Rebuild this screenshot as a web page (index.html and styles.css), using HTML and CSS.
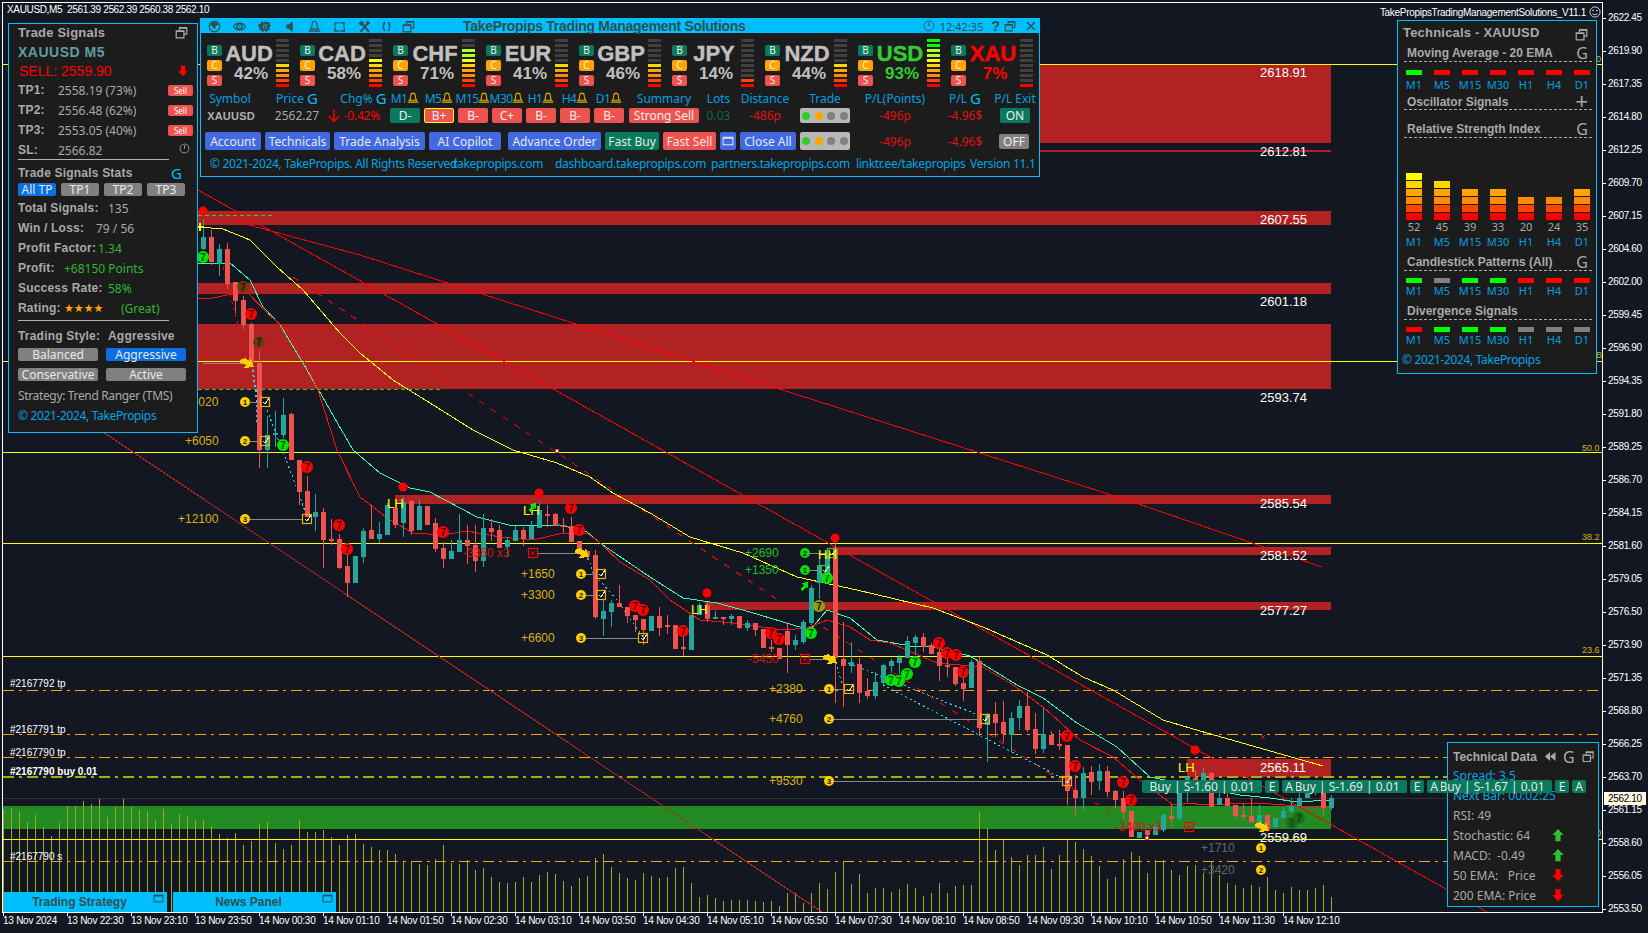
FILE: index.html
```html
<!DOCTYPE html>
<html>
<head>
    <title>XAUUSD,M5</title>
    <link rel="stylesheet" href="styles.css">
</head>
<body>
    <svg class="defs" width="0" height="0">
        <symbol id="i-restore" viewBox="0 0 16 16"><path d="M5.5 5V2h9v8h-3.5M1.5 6h9.5v8.5h-9.500z" fill="none" stroke="currentColor" stroke-width="1.5"/><path d="M5.500 2h9v1.500h-9zM1.500 6h9.500v1.500h-9.500z" fill="currentColor"/></symbol>
        <symbol id="i-globe" viewBox="0 0 16 16"><circle cx="8" cy="8" r="6.500" fill="none" stroke="currentColor" stroke-width="1.500"/><path d="M6 2l5 1 2 3-3 1-1 3-2 1-1-3-3-1 1-3z" fill="currentColor"/></symbol>
        <symbol id="i-eye" viewBox="0 0 16 16"><path d="M.5 8c3-5.500 12-5.500 15 0-3 5.500-12 5.500-15 0z" fill="none" stroke="currentColor" stroke-width="1.500"/><circle cx="8" cy="8" r="3.200" fill="none" stroke="currentColor" stroke-width="1.700"/><circle cx="8" cy="8" r="1" fill="currentColor"/></symbol>
        <symbol id="i-burst" viewBox="0 0 16 16"><path d="M1 5l3-1 0-3 3 2 3-2 1 2 4-1-1 3 2 2-2 2 1 3-3 0-1 3-3-2-3 2-1-3-3 0 1-3-2-2z" fill="currentColor"/><path d="M6 11l2-6M9 11l2-6" stroke="#00bfff" stroke-width="1"/></symbol>
        <symbol id="i-speaker" viewBox="0 0 16 16"><path d="M4 5.500h2.500L12 1.500v13l-5.500-4H4z" fill="currentColor"/></symbol>
        <symbol id="i-bell" viewBox="0 0 16 16"><path d="M8 1.500c-2 0-3 1.500-3 3.500 0 3.500-.5 4.500-2 6h10c-1.500-1.500-2-2.500-2-6 0-2-1-3.500-3-3.500z" fill="none" stroke="currentColor" stroke-width="1.400"/><path d="M1 13.500h14" stroke="currentColor" stroke-width="1.700"/></symbol>
        <symbol id="i-frame" viewBox="0 0 16 16"><path d="M3 3.500h3M10 3.500h3.500V6M14 10v3.500h-4M6 13.500H2.500V10M2.500 6V3.500" fill="none" stroke="currentColor" stroke-width="1.700"/><path d="M6 3.500h4M6 13.500h4M2.500 6v4M13.500 6v4" stroke="currentColor" stroke-width="1"/></symbol>
        <symbol id="i-tools" viewBox="0 0 16 16"><path d="M3 14.500L12 4M4 3l9.500 11.500" stroke="currentColor" stroke-width="2.400"/><path d="M.5 4.500L4 1l3.500 2.500L4 7zM10.500 1.500c2.500-1 4.500 1 4 3.500l-2.500.5-1.500-1.500z" fill="currentColor"/></symbol>
        <symbol id="i-code" viewBox="0 0 16 16"><path d="M6 2.500C3.500 5 3.500 11 6 13.500M10 2.500c2.500 2.500 2.500 8.500 0 11" fill="none" stroke="currentColor" stroke-width="1.800"/></symbol>
        <symbol id="i-clock" viewBox="0 0 16 16"><circle cx="8" cy="8" r="6.500" fill="none" stroke="currentColor" stroke-width="1.200"/><path d="M8 3.500V8" stroke="currentColor" stroke-width="1.400"/></symbol>
        <symbol id="i-x" viewBox="0 0 16 16"><path d="M3 3l10 10M13 3L3 13" stroke="currentColor" stroke-width="2"/></symbol>
        <symbol id="i-rewind" viewBox="0 0 16 16"><path d="M8 2v12L1 8zM15 2v12L8 8z" fill="currentColor"/></symbol>
        <symbol id="i-window" viewBox="0 0 16 16"><path d="M1.500 3h13v10h-13z" fill="none" stroke="currentColor" stroke-width="1.400"/><path d="M1.500 3h13v2h-13z" fill="currentColor"/></symbol>
        <symbol id="i-up" viewBox="0 0 16 16"><path d="M8 1l6.500 7H11v7H5V8H1.500z" fill="currentColor"/></symbol>
        <symbol id="i-down" viewBox="0 0 16 16"><path d="M8 15L1.500 8H5V1h6v7h3.500z" fill="currentColor"/></symbol>
        <symbol id="i-thin-down" viewBox="0 0 16 16"><path d="M8 1v13M2 8l6 6 6-6" fill="none" stroke="currentColor" stroke-width="1.600"/></symbol>
        <symbol id="i-smile" viewBox="0 0 16 16"><circle cx="8" cy="8" r="6.800" fill="none" stroke="currentColor"/><circle cx="5.500" cy="6" r="1" fill="currentColor"/><circle cx="10.500" cy="6" r="1" fill="currentColor"/><path d="M4.500 10c1.500 2 5.500 2 7 0" fill="none" stroke="currentColor"/></symbol>
    </svg>

    <div class="terminal">
        <svg id="chart" class="chart" width="1648" height="933"></svg>

        <div class="chart-title">XAUUSD,M5&nbsp; 2561.39 2562.39 2560.38 2562.10</div>
        <div class="ea-name">TakePropipsTradingManagementSolutions_V11.1 <svg class="smile"><use href="#i-smile"/></svg></div>

        <div class="price-axis">
            <span>2622.45</span><span>2619.90</span><span>2617.35</span><span>2614.80</span>
            <span>2612.25</span><span>2609.70</span><span>2607.15</span><span>2604.60</span>
            <span>2602.00</span><span>2599.45</span><span>2596.90</span><span>2594.35</span>
            <span>2591.80</span><span>2589.25</span><span>2586.70</span><span>2584.15</span>
            <span>2581.60</span><span>2579.05</span><span>2576.50</span><span>2573.90</span>
            <span>2571.35</span><span>2568.80</span><span>2566.25</span><span>2563.70</span>
            <span>2561.15</span><span>2558.60</span><span>2556.05</span><span>2553.50</span>
        </div>
        <div class="price-now">2562.10</div>

        <div class="time-axis">
            <span>13 Nov 2024</span><span>13 Nov 22:30</span><span>13 Nov 23:10</span><span>13 Nov 23:50</span>
            <span>14 Nov 00:30</span><span>14 Nov 01:10</span><span>14 Nov 01:50</span><span>14 Nov 02:30</span>
            <span>14 Nov 03:10</span><span>14 Nov 03:50</span><span>14 Nov 04:30</span><span>14 Nov 05:10</span>
            <span>14 Nov 05:50</span><span>14 Nov 07:30</span><span>14 Nov 08:10</span><span>14 Nov 08:50</span>
            <span>14 Nov 09:30</span><span>14 Nov 10:10</span><span>14 Nov 10:50</span><span>14 Nov 11:30</span>
            <span>14 Nov 12:10</span>
        </div>

        <!-- Trade signals window -->
        <div class="panel signals">
            <div class="row head-row"><span class="title">Trade Signals</span><svg class="ic13 push"><use href="#i-restore"/></svg></div>
            <div class="row symbol-row">XAUUSD M5</div>
            <div class="row sell-row"><span>SELL: 2559.90</span><svg class="ic12 push red"><use href="#i-down"/></svg></div>
            <div class="row"><b class="w40">TP1:</b><span>2558.19 (73%)</span><span class="sell-tag push">Sell</span></div>
            <div class="row"><b class="w40">TP2:</b><span>2556.48 (62%)</span><span class="sell-tag push">Sell</span></div>
            <div class="row"><b class="w40">TP3:</b><span>2553.05 (40%)</span><span class="sell-tag push">Sell</span></div>
            <div class="row"><b class="w40">SL:</b><span>2566.82</span><svg class="ic11 push clock-r"><use href="#i-clock"/></svg></div>
            <div class="rule"></div>
            <div class="row stats-head"><b>Trade Signals Stats</b><span class="g-mark push">G</span></div>
            <div class="tabs">
                <span class="tab on">All TP</span><span class="tab">TP1</span><span class="tab">TP2</span><span class="tab">TP3</span>
            </div>
            <div class="row stat-first"><b class="w90">Total Signals:</b><span>135</span></div>
            <div class="row"><b class="w78">Win / Loss:</b><span>79 / 56</span></div>
            <div class="row"><b class="w80">Profit Factor:</b><span class="good">1.34</span></div>
            <div class="row"><b class="w46">Profit:</b><span class="good">+68150 Points</span></div>
            <div class="row"><b class="w90">Success Rate:</b><span class="good">58%</span></div>
            <div class="row"><b class="w46">Rating:</b><span class="stars">★★★★</span><span class="good great">(Great)</span></div>
            <div class="rule rule-2"></div>
            <div class="row"><b class="w90">Trading Style:</b><b>Aggressive</b></div>
            <div class="styles">
                <span class="tab">Balanced</span><span class="tab on">Aggressive</span>
                <span class="tab">Conservative</span><span class="tab">Active</span>
            </div>
            <div class="row strategy">Strategy: Trend Ranger (TMS)</div>
            <div class="row copy">© 2021-2024, TakePropips</div>
        </div>

        <!-- Main management window -->
        <div class="panel manager">
            <div class="titlebar">
                <div class="tool-icons">
                    <svg><use href="#i-globe"/></svg><svg><use href="#i-eye"/></svg><svg><use href="#i-burst"/></svg>
                    <svg><use href="#i-speaker"/></svg><svg><use href="#i-bell"/></svg><svg><use href="#i-frame"/></svg>
                    <svg><use href="#i-tools"/></svg><svg><use href="#i-code"/></svg><svg><use href="#i-restore"/></svg>
                </div>
                <div class="app-title">TakePropips Trading Management Solutions</div>
                <svg class="ic12 clock-t"><use href="#i-clock"/></svg>
                <span class="clock-text">12:42:35</span>
                <span class="help">?</span>
                <svg class="ic12 win-btn"><use href="#i-restore"/></svg>
                <svg class="ic12 win-close"><use href="#i-x"/></svg>
            </div>

            <div class="currencies">
                <div class="cur"><div class="bcs"><span class="b">B</span><span class="c">C</span><span class="s">S</span></div><div class="cur-name"><strong>AUD</strong><em>42%</em></div><div class="meter" data-lit="5"></div></div>
                <div class="cur"><div class="bcs"><span class="b">B</span><span class="c">C</span><span class="s">S</span></div><div class="cur-name"><strong>CAD</strong><em>58%</em></div><div class="meter" data-lit="6"></div></div>
                <div class="cur"><div class="bcs"><span class="b">B</span><span class="c">C</span><span class="s">S</span></div><div class="cur-name"><strong>CHF</strong><em>71%</em></div><div class="meter" data-lit="8"></div></div>
                <div class="cur"><div class="bcs"><span class="b">B</span><span class="c">C</span><span class="s">S</span></div><div class="cur-name"><strong>EUR</strong><em>41%</em></div><div class="meter" data-lit="5"></div></div>
                <div class="cur"><div class="bcs"><span class="b">B</span><span class="c">C</span><span class="s">S</span></div><div class="cur-name"><strong>GBP</strong><em>46%</em></div><div class="meter" data-lit="5"></div></div>
                <div class="cur"><div class="bcs"><span class="b">B</span><span class="c">C</span><span class="s">S</span></div><div class="cur-name"><strong>JPY</strong><em>14%</em></div><div class="meter" data-lit="2"></div></div>
                <div class="cur"><div class="bcs"><span class="b">B</span><span class="c">C</span><span class="s">S</span></div><div class="cur-name"><strong>NZD</strong><em>44%</em></div><div class="meter" data-lit="5"></div></div>
                <div class="cur strong"><div class="bcs"><span class="b">B</span><span class="c">C</span><span class="s">S</span></div><div class="cur-name"><strong>USD</strong><em>93%</em></div><div class="meter" data-lit="10"></div></div>
                <div class="cur weak"><div class="bcs"><span class="b">B</span><span class="c">C</span><span class="s">S</span></div><div class="cur-name"><strong>XAU</strong><em>7%</em></div><div class="meter" data-lit="1"></div></div>
            </div>

            <div class="info">
                <span>Symbol</span>
                <span>Price <i class="g-mark">G</i></span>
                <span>Chg% <i class="g-mark">G</i></span>
                <span class="tf">M1<svg class="bell"><use href="#i-bell"/></svg></span>
                <span class="tf">M5<svg class="bell"><use href="#i-bell"/></svg></span>
                <span class="tf">M15<svg class="bell"><use href="#i-bell"/></svg></span>
                <span class="tf">M30<svg class="bell"><use href="#i-bell"/></svg></span>
                <span class="tf">H1<svg class="bell"><use href="#i-bell"/></svg></span>
                <span class="tf">H4<svg class="bell"><use href="#i-bell"/></svg></span>
                <span class="tf">D1<svg class="bell"><use href="#i-bell"/></svg></span>
                <span>Summary</span>
                <span>Lots</span>
                <span>Distance</span>
                <span>Trade</span>
                <span>P/L(Points)</span>
                <span>P/L <i class="g-mark">G</i></span>
                <span>P/L Exit</span>

                <b class="v-sym">XAUUSD</b>
                <span class="v-grey">2562.27</span>
                <span class="v-chg"><svg class="ic14 red"><use href="#i-thin-down"/></svg>-0.42%</span>
                <span class="chip teal">D-</span>
                <span class="chip rd picked">B+</span>
                <span class="chip rd">B-</span>
                <span class="chip rd">C+</span>
                <span class="chip rd">B-</span>
                <span class="chip rd">B-</span>
                <span class="chip rd">B-</span>
                <span class="chip rd wide">Strong Sell</span>
                <span class="v-lots">0.03</span>
                <span class="v-red">-486p</span>
                <span class="dots"><i class="d-green"></i><i class="d-orange"></i><i></i><i></i></span>
                <span class="v-red">-496p</span>
                <span class="v-red">-4.96$</span>
                <span class="chip teal toggle">ON</span>
            </div>

            <div class="actions">
                <span class="btn">Account</span>
                <span class="btn">Technicals</span>
                <span class="btn">Trade Analysis</span>
                <span class="btn ai">AI Copilot</span>
                <span class="btn">Advance Order</span>
                <span class="btn buy">Fast Buy</span>
                <span class="btn sell">Fast Sell</span>
                <span class="btn"><svg class="ic12"><use href="#i-window"/></svg></span>
                <span class="btn">Close All</span>
                <span class="dots tall"><i class="d-green"></i><i class="d-orange"></i><i></i><i></i></span>
                <span class="v-red">-496p</span>
                <span class="v-red">-4.96$</span>
                <span class="chip off toggle">OFF</span>
            </div>

            <div class="links">
                <span>© 2021-2024, TakePropips. All Rights Reserved</span>
                <span>takepropips.com</span>
                <span>dashboard.takepropips.com</span>
                <span>partners.takepropips.com</span>
                <span>linktr.ee/takepropips</span>
                <span>Version 11.1</span>
            </div>
        </div>

        <!-- Technicals window -->
        <div class="panel technicals">
            <div class="tech-title"><span>Technicals - XAUUSD</span><svg class="ic13 push"><use href="#i-restore"/></svg></div>
            <div class="tech-head"><span>Moving Average - 20 EMA</span><span class="plain-mark push">G</span></div>
            <div class="bars bars-1"><i class="up"></i><i class="dn"></i><i class="dn"></i><i class="dn"></i><i class="dn"></i><i class="dn"></i><i class="dn"></i></div>
            <div class="tfs tfs-1"><span>M1</span><span>M5</span><span>M15</span><span>M30</span><span>H1</span><span>H4</span><span>D1</span></div>
            <div class="tech-head osc-head"><span>Oscillator Signals</span><span class="plain-mark plus push">+</span></div>
            <div class="tech-head rsi-head"><span>Relative Strength Index</span><span class="plain-mark push">G</span></div>
            <div class="rsi">
                <div class="stack" data-n="6"></div><div class="stack" data-n="5"></div><div class="stack" data-n="4"></div><div class="stack" data-n="4"></div>
                <div class="stack" data-n="3"></div><div class="stack" data-n="3"></div><div class="stack" data-n="4"></div>
            </div>
            <div class="tfs rsi-vals"><span>52</span><span>45</span><span>39</span><span>33</span><span>20</span><span>24</span><span>35</span></div>
            <div class="tfs"><span>M1</span><span>M5</span><span>M15</span><span>M30</span><span>H1</span><span>H4</span><span>D1</span></div>
            <div class="tech-head gap5"><span>Candlestick Patterns (All)</span><span class="plain-mark push">G</span></div>
            <div class="bars"><i class="up"></i><i class="no"></i><i class="up"></i><i class="up"></i><i class="dn"></i><i class="dn"></i><i class="dn"></i></div>
            <div class="tfs"><span>M1</span><span>M5</span><span>M15</span><span>M30</span><span>H1</span><span>H4</span><span>D1</span></div>
            <div class="tech-head gap5"><span>Divergence Signals</span></div>
            <div class="bars"><i class="dn"></i><i class="up"></i><i class="up"></i><i class="up"></i><i class="no"></i><i class="no"></i><i class="no"></i></div>
            <div class="tfs"><span>M1</span><span>M5</span><span>M15</span><span>M30</span><span>H1</span><span>H4</span><span>D1</span></div>
            <div class="copy tech-copy">© 2021-2024, TakePropips</div>
        </div>

        <!-- Technical data window -->
        <div class="panel data">
            <div class="data-head"><b>Technical Data</b><svg class="ic13 push"><use href="#i-rewind"/></svg><span class="plain-mark">G</span><svg class="ic13"><use href="#i-restore"/></svg></div>
            <div class="row blue">Spread: 3.5</div>
            <div class="row blue">Next Bar: 00:02:25</div>
            <div class="row">RSI: 49</div>
            <div class="row"><span class="w98">Stochastic: 64</span><svg class="ic14 green"><use href="#i-up"/></svg></div>
            <div class="row"><span class="w98">MACD: &nbsp;-0.49</span><svg class="ic14 green"><use href="#i-up"/></svg></div>
            <div class="row"><span class="w98">50 EMA: &nbsp; Price</span><svg class="ic14 red"><use href="#i-down"/></svg></div>
            <div class="row"><span class="w98">200 EMA: Price</span><svg class="ic14 red"><use href="#i-down"/></svg></div>
        </div>

        <!-- Open trades on the chart -->
        <div class="trade-tag t1"><span class="tt-main">Buy | S-1.60 | 0.01</span><span>E</span><span>A</span></div>
        <div class="trade-tag t2"><span class="tt-main">Buy | S-1.69 | 0.01</span><span>E</span><span>A</span></div>
        <div class="trade-tag t3"><span class="tt-main">Buy | S-1.67 | 0.01</span><span>E</span><span>A</span></div>

        <div class="dock">
            <div class="dock-btn"><span>Trading Strategy</span><svg class="ic11"><use href="#i-window"/></svg></div>
            <div class="dock-btn"><span>News Panel</span><svg class="ic11"><use href="#i-window"/></svg></div>
        </div>
    </div>
    <script src="script.js"></script>
</body>
</html>
```
FILE: styles.css
```css
* {
    box-sizing: border-box;
}
html, body {
    margin: 0;
    padding: 0;
    background-color: #131722;
}
body {
    font-family: "Noto Sans", sans-serif;
    font-size: 12px;
    color: #a9a9a9;
    overflow: hidden;
}
.defs {
    position: absolute;
}
.terminal {
    position: relative;
    width: 1648px;
    height: 933px;
    overflow: hidden;
}
.chart {
    position: absolute;
    left: 0;
    top: 0;
}
.chart polyline, .chart path {
    shape-rendering: crispEdges;
}
.chart text {
    font-family: "Liberation Sans", sans-serif;
}
.zone-label {
    font-size: 13px;
    fill: #fff;
}
.gain {
    font-size: 12px;
    fill: #d9b310;
}
.gain-green {
    font-size: 12px;
    fill: #1fc01f;
}
.loss {
    font-size: 12px;
    fill: #d81010;
}
.gain-off {
    font-size: 12px;
    fill: #666;
}
.swing {
    font-size: 13px;
    fill: #ffff00;
}
.order {
    font-size: 10px;
    fill: #fff;
}
.order-bold {
    font-size: 10px;
    font-weight: bold;
    fill: #fff;
}
.fib {
    font-size: 9px;
    fill: #d9b310;
}
.seven {
    font-size: 10px;
    font-weight: bold;
    fill: #3a0808;
    text-anchor: middle;
}
.seven-g {
    font-size: 10px;
    font-weight: bold;
    fill: #0a4a0a;
    text-anchor: middle;
}
.digit {
    font-size: 8px;
    font-weight: bold;
    fill: #222;
    text-anchor: middle;
}

.chart-title, .ea-name, .price-axis, .time-axis, .price-now {
    position: absolute;
    font-family: "Liberation Sans", sans-serif;
    font-size: 10px;
    color: #fff;
    white-space: nowrap;
}
.chart-title {
    left: 7px;
    top: 4px;
    letter-spacing: -.35px;
}
.ea-name {
    right: 47px;
    top: 6px;
    display: flex;
    align-items: center;
    gap: 3px;
    letter-spacing: -.3px;
}
.smile {
    width: 12px;
    height: 12px;
}
.price-axis {
    left: 1608px;
    top: 11px;
    height: 905px;
    display: flex;
    flex-direction: column;
    justify-content: space-between;
    letter-spacing: -.35px;
    line-height: 14px;
}
.price-now {
    left: 1604px;
    top: 792px;
    width: 42px;
    height: 13px;
    line-height: 13px;
    padding-left: 4px;
    letter-spacing: -.35px;
    color: #000;
    background-color: #fff8e7;
}
.time-axis {
    left: 3px;
    top: 915px;
    display: flex;
    letter-spacing: -.25px;
}
.time-axis span {
    width: 64px;
}

/* windows */
.panel {
    position: absolute;
    background-color: #1c1c1c;
    border: 1px solid #00bfff;
}
.row {
    display: flex;
    align-items: center;
    height: 20px;
    white-space: nowrap;
}
.push {
    margin-left: auto;
}
.red { color: #ff0000; }
.green { color: #2dc22d; }
.good { color: #2eb82e; }
.ic11 { width: 11px; height: 11px; }
.ic12 { width: 12px; height: 12px; }
.ic13 { width: 13px; height: 13px; }
.ic14 { width: 14px; height: 14px; }
.w40 { width: 40px; }
.w46 { width: 46px; }
.w78 { width: 78px; }
.w80 { width: 80px; }
.w90 { width: 90px; }
.w98 { width: 98px; }
b {
    font-family: "Liberation Sans", sans-serif;
    letter-spacing: .2px;
}
.g-mark {
    font-style: normal;
    color: #00bfff;
    font-size: 15px;
    line-height: 12px;
}
.info .g-mark {
    margin-left: 3px;
}

.signals {
    left: 8px;
    top: 23px;
    width: 190px;
    height: 410px;
    padding: 0 4px 0 9px;
}
.title {
    font-family: "Liberation Sans", sans-serif;
    font-size: 13px;
    font-weight: bold;
    letter-spacing: .2px;
}
.head-row {
    height: 16px;
    padding-right: 5px;
}
.symbol-row {
    height: 20px;
    margin-top: 2px;
    font-family: "Liberation Sans", sans-serif;
    font-size: 14px;
    font-weight: bold;
    letter-spacing: .5px;
    color: #5f9ea0;
}
.sell-row {
    height: 18px;
    font-family: "Liberation Sans", sans-serif;
    font-size: 14px;
    color: #ff0000;
    padding-left: 1px;
    padding-right: 4px;
}
.sell-tag {
    width: 25px;
    height: 11px;
    line-height: 11px;
    text-align: center;
    font-size: 8px;
    color: #fff;
    background-color: #ef5350;
    border-radius: 2px;
}
.clock-r {
    margin-right: 3px;
    margin-bottom: 4px;
}
.rule {
    width: 151px;
    height: 1px;
    background-color: #b0b0b0;
    margin-top: -1px;
}
.rule-2 {
    margin-top: 2px;
    margin-bottom: 5px;
}
.stats-head {
    height: 16px;
    margin-top: 5px;
    padding-right: 11px;
}
.tabs {
    display: grid;
    grid-template-columns: repeat(4, 38px);
    gap: 5px;
    margin-top: 2px;
}
.tab {
    height: 13px;
    line-height: 13px;
    text-align: center;
    color: #e8e8e8;
    background-color: #808080;
    border-radius: 2px;
    font-size: 12px;
}
.tab.on {
    background-color: #0a6fe0;
}
.stat-first {
    margin-top: 2px;
}
.stars {
    width: 57px;
    color: #ffa500;
    font-size: 11px;
    letter-spacing: 0;
    font-family: "DejaVu Sans", sans-serif;
}
.styles {
    display: grid;
    grid-template-columns: 80px 80px;
    gap: 7px 8px;
    margin-top: 2px;
}
.strategy {
    margin-top: 4px;
    letter-spacing: -.35px;
}
.copy {
    color: #00a5e8;
    letter-spacing: -.35px;
}

/* main window */
.manager {
    left: 200px;
    top: 18px;
    width: 840px;
    height: 159px;
}
.titlebar {
    display: flex;
    align-items: center;
    height: 14px;
    background-color: #00bfff;
    color: #2f4f4f;
    padding-right: 2px;
}
.tool-icons {
    display: flex;
    gap: 12px;
    padding-left: 7px;
}
.tool-icons svg {
    width: 13px;
    height: 13px;
}
.tool-icons svg:nth-child(n+8) {
    margin-left: -3px;
}
.app-title {
    margin-left: 48px;
    margin-right: auto;
    font-family: "Liberation Sans", sans-serif;
    font-size: 14px;
    font-weight: bold;
    letter-spacing: -.3px;
    white-space: nowrap;
}
.clock-t {
    margin-right: 5px;
}
.clock-text {
    margin-right: 8px;
    font-size: 11px;
}
.help {
    font-family: "Liberation Sans", sans-serif;
    font-weight: bold;
    font-size: 14px;
    margin-right: 4px;
}
.win-btn {
    margin-right: 9px;
}
.currencies {
    display: flex;
    padding-left: 6px;
    margin-top: 4px;
    height: 50px;
}
.cur {
    display: flex;
    width: 93px;
    flex: none;
}
.bcs {
    display: flex;
    flex-direction: column;
    width: 15px;
    padding-top: 8px;
    gap: 4px;
}
.bcs span {
    height: 11px;
    line-height: 11px;
    text-align: center;
    font-size: 10px;
    color: #eee;
    border-radius: 2px;
}
.bcs .b { background-color: #0a7a5c; }
.bcs .c { background-color: #ffa500; }
.bcs .s { background-color: #ef5350; }
.cur-name {
    width: 54px;
    display: flex;
    flex-direction: column;
    align-items: center;
    padding-top: 7px;
    color: #c0c0c0;
    font-family: "Liberation Sans", sans-serif;
    font-weight: bold;
}
.cur-name strong {
    font-size: 22px;
    line-height: 20px;
    -webkit-text-stroke: .4px currentColor;
}
.cur-name em {
    font-style: normal;
    font-size: 17px;
    line-height: 19px;
    margin-left: 4px;
}
.strong .cur-name { color: #32cd32; }
.weak .cur-name { color: #ff0000; }
.meter {
    width: 13px;
    display: flex;
    flex-direction: column-reverse;
    gap: 2px;
}
.meter i {
    display: block;
    height: 3px;
    background-color: #404040;
}
.info {
    display: grid;
    grid-template-columns: 50px 84px 49px repeat(7, 34px) 76px 33px 60px 60px 80px 60px 40px;
    grid-template-rows: 14px 15px;
    row-gap: 3px;
    align-items: center;
    justify-items: center;
    padding-left: 4px;
    margin-top: 4px;
    white-space: nowrap;
}
.info span {
    color: #00a0e0;
    display: flex;
    align-items: center;
}
.info .tf {
    letter-spacing: -.6px;
}
.bell {
    width: 12px;
    height: 12px;
    color: #e0b000;
}
.v-sym {
    font-size: 11px;
    color: #b0b0b0;
    letter-spacing: .2px;
    margin-left: 2px;
}
.info .v-grey {
    color: #a9a9a9;
}
.info .v-chg {
    color: #ff0000;
    justify-self: end;
    padding-right: 8px;
    gap: 3px;
    letter-spacing: -.2px;
}
.info .v-lots {
    color: #0a6b4a;
}
.info .v-red, .actions .v-red {
    color: #e01010;
}
.info .chip, .actions .chip {
    display: block;
    width: 30px;
    height: 15px;
    line-height: 15px;
    text-align: center;
    color: #eee;
    border-radius: 2px;
}
.teal { background-color: #0a7a5c; }
.rd { background-color: #ef5350; }
.off { background-color: #808080; }
.info .picked {
    border: 1px solid #ffff00;
    line-height: 13px;
}
.info .wide {
    width: 70px;
}
.dots, .info .dots {
    display: flex;
    align-items: center;
    justify-content: space-between;
    width: 50px;
    height: 15px;
    padding: 0 2px;
    background-color: #b8b8b8;
    border-radius: 2px;
}
.dots i {
    width: 8px;
    height: 8px;
    border-radius: 50%;
    background-color: #808080;
}
.dots .d-green { background-color: #32cd32; }
.dots .d-orange { background-color: #ffa500; }
.dots.tall {
    height: 18px;
}
.actions {
    display: grid;
    grid-template-columns: 56px 65px 91px 75px 93px 54px 53px 16px 56px 50px 82px 50px 40px;
    column-gap: 4px;
    align-items: center;
    justify-items: center;
    padding-left: 4px;
    height: 18px;
    margin-top: 9px;
    white-space: nowrap;
}
.btn {
    display: flex;
    align-items: center;
    justify-content: center;
    width: 100%;
    height: 18px;
    color: #e8e8e8;
    background-color: #4169e1;
    border-radius: 2px;
}
.btn.ai {
    width: 72px;
    justify-self: start;
}
.btn.buy { background-color: #0a7a5c; }
.btn.sell { background-color: #ef5350; }
.links {
    display: grid;
    grid-template-columns: 243px 102px 156px 145px 114px auto;
    padding-left: 9px;
    margin-top: 5px;
    color: #00a5e8;
    white-space: nowrap;
    letter-spacing: -.3px;
}

/* technicals window */
.technicals {
    left: 1397px;
    top: 20px;
    width: 200px;
    height: 354px;
    font-family: "Liberation Sans", sans-serif;
}
.tech-title {
    display: flex;
    align-items: center;
    height: 22px;
    padding: 0 8px 0 5px;
    font-size: 13px;
    font-weight: bold;
    letter-spacing: .2px;
}
.tech-title svg {
    margin-top: 4px;
}
.tech-head {
    display: flex;
    align-items: center;
    height: 18px;
    margin: 0 4px 0 6px;
    padding: 0 4px 0 3px;
    border-bottom: 1px dashed #aaa;
    font-size: 12px;
    font-weight: bold;
}
.tech-title + .tech-head {
    margin-top: 1px;
}
.osc-head {
    padding-top: 3px;
}
.rsi-head {
    margin-top: 10px;
    padding-top: 1px;
}
.gap5 {
    margin-top: 5px;
}
.plain-mark {
    font-family: "Noto Sans", sans-serif;
    font-weight: normal;
    font-size: 16px;
    line-height: 14px;
    color: #a9a9a9;
}
.plus {
    font-size: 22px;
    font-family: "Liberation Sans", sans-serif;
}
.bars {
    display: grid;
    grid-template-columns: repeat(7, 28px);
    justify-items: center;
    padding-left: 2px;
    margin-top: 7px;
}
.bars-1 {
    margin-top: 8px;
}
.bars i {
    width: 16px;
    height: 5px;
}
.bars .up { background-color: #00ff00; }
.bars .dn { background-color: #ff0000; }
.bars .no { background-color: #808080; }
.tfs {
    display: grid;
    grid-template-columns: repeat(7, 28px);
    justify-items: center;
    padding-left: 2px;
    height: 13px;
    line-height: 13px;
    margin-top: 1px;
    color: #00a0e0;
    font-family: "Noto Sans", sans-serif;
    font-size: 11px;
}
.tfs-1 {
    height: 14px;
    margin-top: 3px;
}
.rsi {
    display: grid;
    grid-template-columns: repeat(7, 28px);
    justify-items: center;
    align-items: end;
    padding-left: 2px;
    height: 82px;
}
.stack {
    display: flex;
    flex-direction: column-reverse;
    gap: 1px;
    width: 16px;
}
.stack i {
    height: 7px;
}
.rsi-vals {
    color: #a9a9a9;
    height: 14px;
    line-height: 14px;
    margin-top: 0;
}
.tech-copy {
    font-family: "Noto Sans", sans-serif;
    font-size: 12px;
    margin-top: 5px;
    padding-left: 4px;
}

/* technical data window */
.data {
    left: 1447px;
    top: 742px;
    width: 152px;
    height: 165px;
    padding: 5px 4px 0 5px;
}
.data-head {
    display: flex;
    align-items: center;
    gap: 7px;
    height: 17px;
    white-space: nowrap;
}
.data-head b {
    letter-spacing: 0;
}
.blue {
    color: #00a5e8;
}

/* tags and dock over the chart */
.trade-tag {
    position: absolute;
    top: 780px;
    display: flex;
    gap: 3px;
    color: #e8e8e8;
}
.trade-tag span {
    width: 14px;
    height: 13px;
    line-height: 13px;
    text-align: center;
    background-color: #0a7a5c;
    border-radius: 2px;
}
.trade-tag .tt-main {
    width: 120px;
}
.t1 { left: 1142px; z-index: 3; }
.t2 { left: 1287px; z-index: 2; }
.t3 { left: 1432px; z-index: 1; }
.dock {
    position: absolute;
    left: 4px;
    top: 892px;
    display: flex;
    gap: 6px;
}
.dock-btn {
    display: flex;
    justify-content: center;
    width: 163px;
    height: 20px;
    line-height: 20px;
    background-color: #00bfff;
    color: #2f4f4f;
    font-family: "Liberation Sans", sans-serif;
    font-size: 12px;
    font-weight: bold;
}
.dock-btn span {
    margin-left: auto;
    margin-right: auto;
}
.dock-btn svg {
    margin: 1px 3px 0 -2px;
}
```
FILE: script.js
```js
// meter colours, bottom segment first
var meterColors = ["#ff0000", "#ff4500", "#ff8c00", "#ffa500", "#ffd700", "#ffff00", "#adff2f", "#adff2f", "#00ff00", "#00ff00"];
var stackColors = ["#ff0000", "#ff4500", "#ff8c00", "#ffa500", "#ffd700", "#ffff00"];

document.querySelectorAll(".meter").forEach(function (m) {
    var lit = +m.dataset.lit, html = "";
    for (var i = 0; i < 10; i++) {
        html += i < lit ? '<i style="background-color:' + meterColors[i] + '"></i>' : "<i></i>";
    }
    m.innerHTML = html;
});
document.querySelectorAll(".stack").forEach(function (s) {
    var html = "";
    for (var i = 0; i < +s.dataset.n; i++) {
        html += '<i style="background-color:' + stackColors[i] + '"></i>';
    }
    s.innerHTML = html;
});

// candle k sits at x = 11.33 + 8k
function barX(k) {
    return Math.round(11.33 + 8 * k);
}

// from bar 24 on: colour, wick top, body top, body bottom, wick bottom (screen y)
var candles = [
    ["g",219,237,249,250],["r",230,237,262,265],["g",244,249,264,276],["r",243,249,284,289],["r",282,282,301,313],
    ["r",296,300,325,329],["r",323,324,363,364],["r",351,363,450,468],["g",416,435,450,468],["g",411,433,435,447],
    ["g",398,415,435,438],["r",413,414,460,460],["r",460,460,492,505],["r",476,491,517,517],["g",494,512,517,531],
    ["r",508,512,540,568],["r",519,539,541,545],["r",534,539,568,569],["r",552,566,583,597],["g",556,556,583,583],
    ["g",528,531,557,563],["r",505,530,539,539],["g",522,534,539,543],["g",503,505,535,535],["r",507,508,525,528],
    ["g",497,502,523,537],["r",500,501,531,535],["g",499,506,530,530],["r",506,506,525,525],["r",518,523,549,552],
    ["r",542,548,559,568],["g",540,551,559,559],["g",514,540,552,552],["r",525,540,546,564],["r",525,545,561,572],
    ["g",514,528,561,567],["r",519,528,532,541],["r",525,530,548,548],["g",537,540,547,557],["g",526,530,541,541],
    ["r",527,530,539,546],["g",521,526,539,539],["g",503,510,528,528],["r",505,514,515,527],["r",513,514,526,526],
    ["r",518,525,527,533],["r",517,526,542,542],["r",541,541,553,553],["r",551,551,556,560],["r",550,555,617,619],
    ["g",600,611,619,636],["g",600,603,612,627],["r",585,603,607,607],["r",607,607,616,623],["r",615,615,620,632],
    ["r",619,619,630,645],["g",616,616,631,631],["r",607,616,628,636],["r",615,625,626,634],["r",625,625,649,649],
    ["r",625,647,649,656],["g",615,615,650,650],["g",603,605,615,615],["r",602,605,619,622],["g",611,617,619,619],
    ["r",617,617,619,625],["g",614,616,619,625],["r",616,616,628,629],["g",620,623,628,631],["r",623,623,630,636],
    ["r",629,629,648,648],["r",640,647,649,652],["r",648,648,659,659],["r",622,631,645,673],["g",635,640,645,650],
    ["g",620,622,642,644],["g",585,588,623,625],["g",556,565,583,599],["g",549,555,575,575],["r",538,549,658,703],
    ["r",622,659,666,707],["g",642,662,666,673],["r",658,664,693,703],["r",678,691,696,699],["g",672,682,696,699],
    ["g",664,665,683,685],["g",659,661,666,673],["g",655,657,663,674],["g",636,641,658,658],["g",635,637,643,655],
    ["r",633,637,647,652],["r",643,645,654,654],["r",643,652,666,681],["r",657,665,667,677],["r",667,667,684,686],
    ["r",673,683,689,701],["g",660,662,688,688],["r",657,661,728,736],["g",713,714,725,762],["r",702,714,723,737],
    ["r",701,722,734,742],["g",712,718,735,752],["g",700,706,718,730],["r",692,706,730,732],["r",713,729,749,754],
    ["g",707,734,749,753],["r",731,735,745,745],["r",730,744,746,750],["r",745,745,791,805],["r",775,790,798,815],
    ["g",767,773,798,810],["r",766,772,782,795],["g",764,771,781,790],["r",766,771,792,797],["r",790,791,800,808],
    ["r",791,798,812,819],["r",811,811,837,837],["g",832,832,838,838],["r",830,830,835,840],["g",823,827,835,835],
    ["g",813,815,830,832],["r",804,816,819,826],["g",780,793,819,821],["g",777,777,780,802],["r",770,778,780,790],
    ["g",768,773,780,780],["r",772,773,807,807],["g",780,798,805,805],["r",793,798,806,806],["r",805,805,816,818],
    ["r",803,815,817,820],["r",798,816,822,823],["g",805,815,823,830],["r",815,815,830,830],["g",818,818,827,828],
    ["g",807,811,818,818],["g",798,806,812,812],["g",793,798,806,806],["g",785,790,798,798],["g",780,782,790,795],
    ["r",782,790,808,815],["g",795,798,808,810]
];

// volume tops from bar 0
var volumes = [
    808,811,822,815,827,836,823,806,806,801,804,799,817,807,799,807,810,811,820,809,824,814,816,820,820,826,
    834,838,833,845,841,824,822,843,849,845,820,832,832,830,837,845,835,834,844,847,850,850,854,861,861,864,865,859,
    845,863,864,860,870,868,877,882,
    883,882,877,882,875,872,874,881,886,878,876,858,854,867,873,878,880,873,876,878,877,868,867,883,897,895,898,901,
    900,900,900,901,902,901,906,893,893,903,893,883,889,872,861,884,874,893,888,888,892,889,884,888,896,893,883,893,
    886,885,885,812,828,850,840,857,865,855,855,847,869,855,840,842,849,856,866,879,877,859,852,856,
    873,860,860,870,875,866,865,873,862,875,883,885,888,885,887,877,890,893,887,890,890,888,885,897
];

var svg = "";

// zones: left, top, bottom, label, label y
var zones = [
    [200,64,143,"2618.91",77],[1040,150,152,"2612.81",156],[197,211,225,"2607.55",224],[197,283,294,"2601.18",306],
    [197,324,389,"2593.74",402],[395,495,504,"2585.54",508],[833,547,555,"2581.52",560],[705,602,610,"2577.27",615],
    [1187,759,777,"2565.11",772]
];
zones.forEach(function (z) {
    svg += '<rect x="' + z[0] + '" y="' + z[1] + '" width="' + (1331 - z[0]) + '" height="' + (z[2] - z[1]) + '" fill="#b22222"/>';
});
svg += '<rect x="3" y="806" width="1328" height="23" fill="#228b22"/>';

// volumes
var vol = "M3.500 810V912";
volumes.forEach(function (top, k) {
    vol += "M" + (barX(k) + 0.5) + " " + top + "V912";
});
svg += '<path d="' + vol + '" stroke="#a0a81e" fill="none"/>';

// price lines
[64, 361, 452, 543, 656, 839].forEach(function (y) {
    svg += '<path d="M3 ' + (y + 0.5) + 'H1602" stroke="#ffff00"/>';
});
svg += '<path d="M3 798.500H1602" stroke="#333"/>';
[690, 734, 757, 861].forEach(function (y) {
    svg += '<path d="M3 ' + (y + 0.5) + 'H1602" stroke="#ffa010" stroke-dasharray="11 5 3 5"/>';
});
svg += '<path d="M3 777H1602" stroke="#a0b010" stroke-width="2" stroke-dasharray="11 5 3 5"/>';

function line(points, color, extra) {
    svg += '<polyline points="' + points + '" fill="none" stroke="' + color + '" ' + (extra || "") + '/>';
}
// trend lines and averages
line("198,190 1487,912", "#ff0000");
line("223,218 360,255 1127,500 1322,567", "#ff0000");
line("100,430 822,912", "#c02020");
line("293,277 793,610", "#ff0000", 'stroke-dasharray="6 8"');
line("823,627 1117,817", "#ff0000", 'stroke-dasharray="6 8"');
line("223,267 240,333 250,360", "#ff0000", 'stroke-dasharray="3 4"');
line("198,227 223,229 250,240 277,267 303,290 340,333 360,353 393,380 430,403 473,430 513,450 557,463 590,477 613,493 650,513 690,537 743,553 797,577 857,590 933,608 983,627 1047,655 1083,677 1113,690 1163,720 1200,731 1323,766", "#ffff00");
line("198,263 230,263 250,280 263,307 280,325 303,363 330,410 353,450 380,473 410,488 430,492 477,517 513,526 560,525 587,532 600,543 650,577 683,598 717,603 750,612 793,625 810,630 827,610 850,618 877,640 910,646 933,647 970,656 1017,685 1043,698 1077,723 1117,747 1150,777 1240,795 1270,798 1297,802 1330,800", "#2effb0");
line("198,298 213,298 227,295 247,292 267,313 290,333 317,387 337,450 360,497 373,507 390,520 413,533 443,535 467,531 500,537 533,540 563,533 587,533 600,543 620,562 650,580 670,600 700,620 733,623 783,630 807,628 827,620 850,627 870,640 890,643 937,663 983,667 1013,685 1043,707 1080,740 1113,757 1140,780 1173,805 1193,803 1200,805 1257,803 1327,808", "#ff1010");
line("252,365 257,400 258,450", "#19e3f0", 'stroke-dasharray="2 3" stroke-width="2"');
line("267,410 290,470 300,497 307,517", "#19e3f0", 'stroke-dasharray="2 3"');
line("587,553 593,573 617,600 643,637", "#19e3f0", 'stroke-dasharray="2 3"');
line("835,657 842,685", "#19e3f0", 'stroke-dasharray="2 3"');
line("848,663 983,717", "#19e3f0", 'stroke-dasharray="2 3"');
line("883,685 1060,777", "#19e3f0", 'stroke-dasharray="2 3"');
svg += '<path d="M198 215.500H275" stroke="#32cd32" stroke-dasharray="4 3"/>';
svg += '<path d="M198 389.500H443" stroke="#32cd32" stroke-dasharray="4 3"/>';

// candles
var wicks = { r: "", g: "" }, bodies = { r: "", g: "" };
candles.forEach(function (c, i) {
    var x = barX(i + 24);
    wicks[c[0]] += "M" + (x + 0.5) + " " + c[1] + "V" + c[4];
    bodies[c[0]] += "M" + (x - 2) + " " + c[2] + "h5V" + Math.max(c[3], c[2] + 2) + "h-5z";
});
svg += '<path d="' + wicks.r + '" stroke="#ef5350"/><path d="' + wicks.g + '" stroke="#26a69a"/>';
svg += '<path d="' + bodies.r + '" fill="#ef5350"/><path d="' + bodies.g + '" fill="#26a69a"/>';

// white level texts sit over the candles
zones.forEach(function (z) {
    svg += '<text class="zone-label" x="1260" y="' + z[4] + '">' + z[3] + "</text>";
});
svg += '<text class="zone-label" x="1260" y="842">2559.69</text>';

// axis ticks and frame
var ticks = "";
for (var t = 0; t < 21; t++) {
    ticks += "M" + (3.5 + 64 * t) + " 912v4";
}
for (t = 0; t < 28; t++) {
    ticks += "M1602 " + (18.5 + 33 * t) + "h4";
}
svg += '<path d="' + ticks + '" stroke="#fff"/>';
svg += '<rect x="2.500" y="2.500" width="1600" height="910" fill="none" stroke="#fff"/>';

// markers
function sevens(list, fill, cls) {
    list.forEach(function (p) {
        svg += '<circle cx="' + p[0] + '" cy="' + p[1] + '" r="6" fill="' + fill + '"/>';
        svg += '<text class="' + cls + '" x="' + p[0] + '" y="' + (p[1] + 3.5) + '">7</text>';
    });
}
sevens([[307,467],[339,525],[347,549],[443,532],[571,508],[579,530],[635,606],[643,610],[251,314],[683,631],[771,633],[779,639],[939,643],[947,653],[956,655],[963,672],[1067,736],[1075,766],[1123,782],[1131,800]], "#ff0000", "seven");
sevens([[283,445],[203,257],[811,633],[827,578],[891,680],[899,681],[907,674],[915,662]], "#00e600", "seven-g");
sevens([[243,287],[259,342]], "#6b3a14", "seven");
sevens([[819,606]], "#8fa010", "seven");
sevens([[1292,823],[1299,818]], "#1c6e1c", "seven-g");
[[203,211],[539,493],[403,487],[707,593],[835,538],[1195,750]].forEach(function (p) {
    svg += '<circle cx="' + p[0] + '" cy="' + p[1] + '" r="4.500" fill="#ff0000"/>';
});

function box(x, y, color, mark) {
    svg += '<rect x="' + (x - 4.5) + '" y="' + (y - 4.5) + '" width="9" height="9" fill="none" stroke="' + color + '" stroke-width="1.200"/>';
    svg += '<path d="' + (mark === "x" ? "M" + (x - 2) + " " + (y - 2) + "l4 4m0 -4l-4 4" : "M" + (x - 2) + " " + y + "l2 2l4 -6") + '" fill="none" stroke="' + (mark === "x" ? color : "#d8e8d0") + '"/>';
}
function arrow(x, y) {
    svg += '<path d="M' + (x - 7) + " " + (y - 3) + "l5 -2 5 3 1 -3 3 9 -10 1 2 -3 -6 -2z" + '" fill="#ffd000"/>';
}
// target: text, text x, y, number, circle x, box x, colour class
function target(label, tx, y, n, cx, bx, cls, color) {
    svg += '<text class="' + cls + '" x="' + tx + '" y="' + (y + 4) + '">' + label + "</text>";
    svg += '<path d="M' + (cx + 5) + " " + (y + 0.5) + "H" + (bx - 4) + '" stroke="#888"/>';
    svg += '<circle cx="' + cx + '" cy="' + y + '" r="5" fill="' + color + '"/>';
    svg += '<text class="digit" x="' + cx + '" y="' + (y + 3) + '">' + n + "</text>";
    if (bx) box(bx, y, cls === "gain-green" ? "#30d030" : "#f0b000", "v");
}
target("+12020", 178, 402, 1, 245, 265, "gain", "#ffd000");
target("+6050", 185, 441, 2, 245, 265, "gain", "#ffd000");
target("+12100", 178, 519, 3, 245, 307, "gain", "#ffd000");
target("+1650", 521, 574, 1, 581, 601, "gain", "#ffd000");
target("+3300", 521, 595, 2, 581, 601, "gain", "#ffd000");
target("+6600", 521, 638, 3, 581, 643, "gain", "#ffd000");
target("+2690", 745, 553, 2, 805, 832, "gain-green", "#10d810");
target("+1350", 745, 570, 1, 805, 825, "gain-green", "#10d810");
target("+2380", 769, 689, 1, 829, 849, "gain", "#ffd000");
target("+4760", 769, 719, 2, 829, 985, "gain", "#ffd000");
target("+9530", 769, 781, 3, 829, 1067, "gain", "#ffd000");

[["+1710", 1201, 848, 1], ["+3420", 1201, 870, 2]].forEach(function (g) {
    svg += '<text class="gain-off" x="' + g[1] + '" y="' + (g[2] + 4) + '">' + g[0] + "</text>";
    svg += '<circle cx="1261" cy="' + g[2] + '" r="5" fill="#ffd000"/><text class="digit" x="1261" y="' + (g[2] + 3) + '">' + g[3] + "</text>";
});

// closed trades
[["-3360 x3", 463, 553, 533, 582], ["-5450", 748, 659, 805, 830], ["-3400 x3", 1115, 827, 1189, 1262]].forEach(function (l) {
    svg += '<text class="loss" x="' + l[1] + '" y="' + (l[2] + 4) + '">' + l[0] + "</text>";
    svg += '<path d="M' + (l[3] + 5) + " " + (l[2] + 0.5) + "H" + l[4] + '" stroke="#888"/>';
    box(l[3], l[2], "#ff0000", "x");
    arrow(l[4], l[2]);
});
svg += '<path d="M203 363.500H245" stroke="#888"/>';
arrow(247, 363);

[["LH", 387, 508], ["LH", 523, 515], ["LH", 691, 614], ["HH", 818, 559], ["LH", 1178, 772]].forEach(function (s) {
    svg += '<text class="swing" x="' + s[1] + '" y="' + s[2] + '">' + s[0] + "</text>";
});
svg += '<path d="M529 504l7 -1 0 7 -2 -2 -4 4 -2 -2 4 -4zM801 583l7 -1 0 7 -2 -2 -4 4 -2 -2 4 -4z" fill="#00e600"/>';
svg += '<path d="M200 223v8M196 227h8" stroke="#ffff00" stroke-width="2"/>';
svg += '<path d="M1261 735l4 4m0 -4l-4 4" stroke="#e01010"/>';
svg += '<rect x="555.500" y="449.500" width="3" height="3" fill="#fff" stroke="#e04040"/><rect x="1145.500" y="836.500" width="3" height="3" fill="#fff" stroke="#e04040"/>';

// order labels
[["#2167792 tp", 683], ["#2167791 tp", 729], ["#2167790 tp", 752]].forEach(function (o) {
    svg += '<text class="order" x="10" y="' + (o[1] + 4) + '">' + o[0] + "</text>";
});
svg += '<text class="order-bold" x="10" y="775">#2167790 buy 0.01</text>';
svg += '<text class="order" x="10" y="860">#2167790 s</text>';

// fibo levels and their small marks at the right edge
[["50.0", 1582, 451], ["38.2", 1582, 540], ["23.6", 1582, 653], ["0", 1596, 62], ["B", 1596, 358], ["0", 1596, 836]].forEach(function (f) {
    svg += '<text class="fib" x="' + f[1] + '" y="' + f[2] + '">' + f[0] + "</text>";
});

document.getElementById("chart").innerHTML = svg;
```
